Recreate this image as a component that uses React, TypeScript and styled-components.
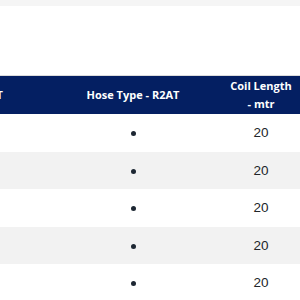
import { useLayoutEffect, useRef } from "react";
import styled, { createGlobalStyle } from "styled-components";

const GlobalStyle = createGlobalStyle`
  html, body {
    margin: 0;
    padding: 0;
    background: #ffffff;
  }
  body {
    font-family: "Open Sans", "Liberation Sans", sans-serif;
  }
`;

const rows = [1, 2, 3, 4, 5, 6];

const App = () => {
  const scrollRef = useRef<HTMLDivElement>(null);

  // the table is shown scrolled all the way to the right
  useLayoutEffect(() => {
    const el = scrollRef.current;
    if (el) el.scrollLeft = el.scrollWidth - el.clientWidth;
  }, []);

  return (
    <>
      <GlobalStyle />
      <Page>
        <TopStrip />
        <Intro />
        <TableScroll ref={scrollRef}>
          <SpecTable>
            <colgroup>
              <col style={{ width: 175 }} />
              <col style={{ width: 178 }} />
              <col style={{ width: 78 }} />
            </colgroup>
            <thead>
              <tr>
                <HeadCell>Hose Type - R1AT</HeadCell>
                <HeadCell>Hose Type - R2AT</HeadCell>
                <HeadCell>Coil Length - mtr</HeadCell>
              </tr>
            </thead>
            <tbody>
              {rows.map((r, i) => (
                <Row key={r} striped={i % 2 === 1}>
                  <Cell></Cell>
                  <Cell>
                    <Dot />
                  </Cell>
                  <Cell>20</Cell>
                </Row>
              ))}
            </tbody>
          </SpecTable>
        </TableScroll>
      </Page>
    </>
  );
};

export default App;

const Page = styled.div`
  width: 300px;
  display: flex;
  flex-direction: column;
`;

const TopStrip = styled.div`
  height: 6px;
  background: #f5f5f5;
`;

const Intro = styled.div`
  height: 69px;
  background: #ffffff;
`;

const TableScroll = styled.div`
  overflow-x: auto;
  border-top: 1px solid #dcdcdc;
  scrollbar-width: none;
  &::-webkit-scrollbar {
    display: none;
  }
`;

const SpecTable = styled.table`
  width: 431px;
  table-layout: fixed;
  border-collapse: collapse;
`;

const HeadCell = styled.th`
  height: 38px;
  padding: 0 6px;
  background: #041f62;
  color: #ffffff;
  font-family: "Open Sans", "Liberation Sans", sans-serif;
  font-size: 11px;
  font-weight: 700;
  line-height: 18px;
  text-align: center;
  vertical-align: middle;
  white-space: normal;
`;

const Row = styled.tr<{ striped: boolean }>`
  height: 37.5px;
  background: ${({ striped }) => (striped ? "#f2f2f2" : "#ffffff")};
`;

const Cell = styled.td`
  padding: 0 8px;
  color: #212529;
  font-family: "Liberation Sans", sans-serif;
  font-size: 13.5px;
  text-align: center;
  vertical-align: middle;
`;

const Dot = styled.span`
  display: inline-block;
  width: 5px;
  height: 5px;
  border-radius: 50%;
  background: #1d2733;
  vertical-align: middle;
`;
